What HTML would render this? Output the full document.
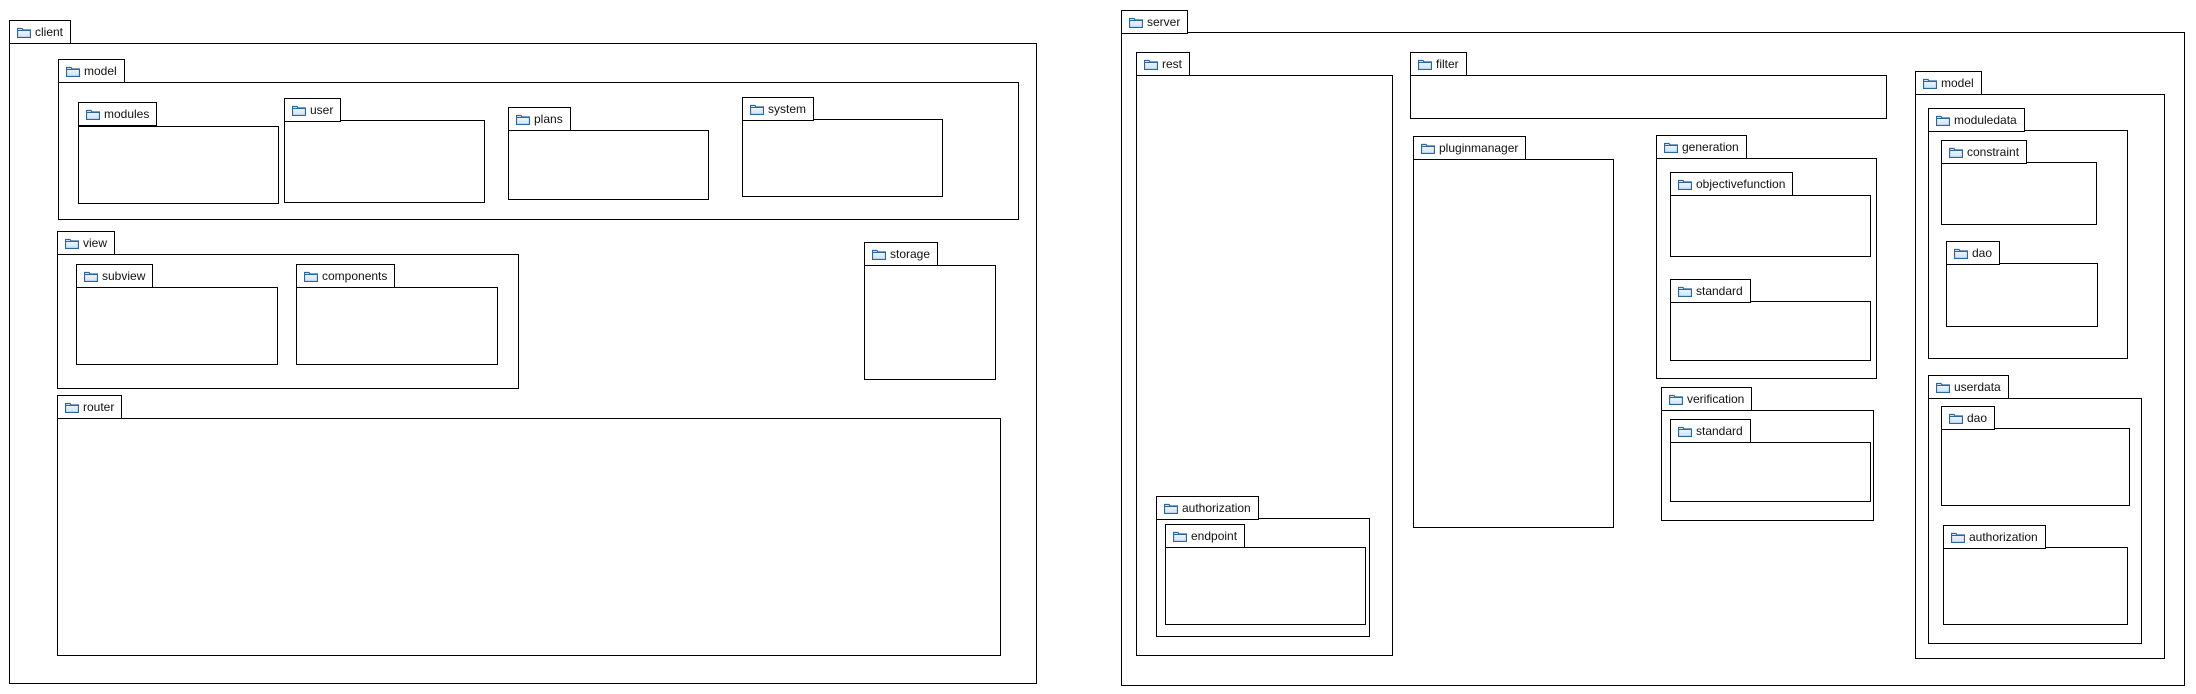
<!DOCTYPE html>
<html><head><meta charset="utf-8"><style>
html,body{margin:0;padding:0;background:#fff;width:2196px;height:694px;overflow:hidden;position:relative}
.t,.b{position:absolute;border:1px solid #000;box-sizing:border-box;background:#fff}
.t{height:24px;padding:0 7px 0 25px;font:12px "Liberation Sans",sans-serif;line-height:22px;white-space:nowrap;color:#111}
.t svg{position:absolute;left:7px;top:6px}
</style></head><body>
<svg width="0" height="0" style="position:absolute"><defs><linearGradient id="g" x1="0" y1="0" x2="0" y2="1"><stop offset="0" stop-color="#f4f9ff"/><stop offset="1" stop-color="#cfe3f7"/></linearGradient><symbol id="f" viewBox="0 0 14 11"><path d="M0.5 1.5h4.5l1 1.5h7.5v7.5h-13z" fill="url(#g)" stroke="#2a66a0" stroke-width="1.2"/><path d="M0.5 3.5h13" stroke="#2a66a0" stroke-width="1"/></symbol></defs></svg>

<!-- CLIENT -->
<div class="b" style="left:9px;top:43px;width:1028px;height:641px"></div>
<div class="t" style="left:9px;top:20px">client<svg width="14" height="11"><use href="#f"/></svg></div>

<div class="b" style="left:58px;top:82px;width:961px;height:138px"></div>
<div class="t" style="left:58px;top:59px">model<svg width="14" height="11"><use href="#f"/></svg></div>

<div class="b" style="left:78px;top:126px;width:201px;height:78px"></div>
<div class="t" style="left:78px;top:102px">modules<svg width="14" height="11"><use href="#f"/></svg></div>

<div class="b" style="left:284px;top:120px;width:201px;height:83px"></div>
<div class="t" style="left:284px;top:98px">user<svg width="14" height="11"><use href="#f"/></svg></div>

<div class="b" style="left:508px;top:130px;width:201px;height:70px"></div>
<div class="t" style="left:508px;top:107px">plans<svg width="14" height="11"><use href="#f"/></svg></div>

<div class="b" style="left:742px;top:119px;width:201px;height:78px"></div>
<div class="t" style="left:742px;top:97px">system<svg width="14" height="11"><use href="#f"/></svg></div>

<div class="b" style="left:57px;top:254px;width:462px;height:135px"></div>
<div class="t" style="left:57px;top:231px">view<svg width="14" height="11"><use href="#f"/></svg></div>

<div class="b" style="left:76px;top:287px;width:202px;height:78px"></div>
<div class="t" style="left:76px;top:264px">subview<svg width="14" height="11"><use href="#f"/></svg></div>

<div class="b" style="left:296px;top:287px;width:202px;height:78px"></div>
<div class="t" style="left:296px;top:264px">components<svg width="14" height="11"><use href="#f"/></svg></div>

<div class="b" style="left:864px;top:265px;width:132px;height:115px"></div>
<div class="t" style="left:864px;top:242px">storage<svg width="14" height="11"><use href="#f"/></svg></div>

<div class="b" style="left:57px;top:418px;width:944px;height:238px"></div>
<div class="t" style="left:57px;top:395px">router<svg width="14" height="11"><use href="#f"/></svg></div>

<!-- SERVER -->
<div class="b" style="left:1121px;top:32px;width:1064px;height:654px"></div>
<div class="t" style="left:1121px;top:10px">server<svg width="14" height="11"><use href="#f"/></svg></div>

<div class="b" style="left:1136px;top:75px;width:257px;height:581px"></div>
<div class="t" style="left:1136px;top:52px">rest<svg width="14" height="11"><use href="#f"/></svg></div>

<div class="b" style="left:1156px;top:518px;width:214px;height:119px"></div>
<div class="t" style="left:1156px;top:496px">authorization<svg width="14" height="11"><use href="#f"/></svg></div>

<div class="b" style="left:1165px;top:547px;width:201px;height:78px"></div>
<div class="t" style="left:1165px;top:524px">endpoint<svg width="14" height="11"><use href="#f"/></svg></div>

<div class="b" style="left:1410px;top:75px;width:477px;height:44px"></div>
<div class="t" style="left:1410px;top:52px">filter<svg width="14" height="11"><use href="#f"/></svg></div>

<div class="b" style="left:1413px;top:159px;width:201px;height:369px"></div>
<div class="t" style="left:1413px;top:136px">pluginmanager<svg width="14" height="11"><use href="#f"/></svg></div>

<div class="b" style="left:1656px;top:158px;width:221px;height:221px"></div>
<div class="t" style="left:1656px;top:135px">generation<svg width="14" height="11"><use href="#f"/></svg></div>

<div class="b" style="left:1670px;top:195px;width:201px;height:62px"></div>
<div class="t" style="left:1670px;top:172px">objectivefunction<svg width="14" height="11"><use href="#f"/></svg></div>

<div class="b" style="left:1670px;top:301px;width:201px;height:60px"></div>
<div class="t" style="left:1670px;top:279px">standard<svg width="14" height="11"><use href="#f"/></svg></div>

<div class="b" style="left:1661px;top:410px;width:213px;height:111px"></div>
<div class="t" style="left:1661px;top:387px">verification<svg width="14" height="11"><use href="#f"/></svg></div>

<div class="b" style="left:1670px;top:442px;width:201px;height:60px"></div>
<div class="t" style="left:1670px;top:419px">standard<svg width="14" height="11"><use href="#f"/></svg></div>

<div class="b" style="left:1915px;top:94px;width:250px;height:565px"></div>
<div class="t" style="left:1915px;top:71px">model<svg width="14" height="11"><use href="#f"/></svg></div>

<div class="b" style="left:1928px;top:130px;width:200px;height:229px"></div>
<div class="t" style="left:1928px;top:108px">moduledata<svg width="14" height="11"><use href="#f"/></svg></div>

<div class="b" style="left:1941px;top:162px;width:156px;height:63px"></div>
<div class="t" style="left:1941px;top:140px">constraint<svg width="14" height="11"><use href="#f"/></svg></div>

<div class="b" style="left:1946px;top:263px;width:152px;height:64px"></div>
<div class="t" style="left:1946px;top:241px">dao<svg width="14" height="11"><use href="#f"/></svg></div>

<div class="b" style="left:1928px;top:398px;width:214px;height:246px"></div>
<div class="t" style="left:1928px;top:375px">userdata<svg width="14" height="11"><use href="#f"/></svg></div>

<div class="b" style="left:1941px;top:428px;width:189px;height:78px"></div>
<div class="t" style="left:1941px;top:406px">dao<svg width="14" height="11"><use href="#f"/></svg></div>

<div class="b" style="left:1943px;top:547px;width:185px;height:78px"></div>
<div class="t" style="left:1943px;top:525px">authorization<svg width="14" height="11"><use href="#f"/></svg></div>
</body></html>
